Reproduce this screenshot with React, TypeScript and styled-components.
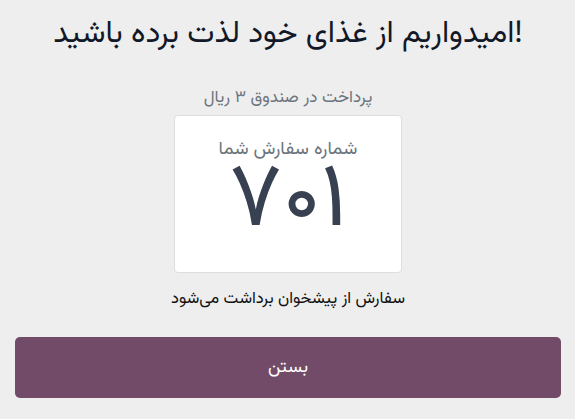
import styled, { createGlobalStyle } from "styled-components"

const Global = createGlobalStyle`
  html, body {
    margin: 0;
    padding: 0;
    background: #eeeeee;
  }
  body {
    font-family: "Vazirmatn", "Noto Sans Arabic", "Noto Naskh Arabic", "DejaVu Sans", sans-serif;
  }
`

const Page = styled.div`
  direction: rtl;
  box-sizing: border-box;
  height: 419px;
  display: flex;
  flex-direction: column;
  align-items: center;
  padding: 14px 14px 21px 15px;
`

const Title = styled.h1`
  margin: 0;
  font-size: 31px;
  font-weight: 400;
  color: #111827;
  line-height: 42px;
`

const Main = styled.div`
  flex: 1;
  display: flex;
  flex-direction: column;
  align-items: center;
  padding-top: 30px;
`

const Payment = styled.div`
  font-size: 17px;
  color: #6c757d;
  line-height: 24px;
  margin-bottom: 5px;
`

const Card = styled.div`
  box-sizing: border-box;
  width: 228px;
  height: 158px;
  background: #ffffff;
  border: 1px solid #dddddd;
  border-radius: 4px;
  display: flex;
  flex-direction: column;
  align-items: center;
  padding-top: 22px;
`

const CardLabel = styled.div`
  font-size: 18.5px;
  color: #6c757d;
  line-height: 24px;
`

const OrderNumber = styled.div`
  font-size: 91px;
  line-height: 82px;
  color: #374151;
`

const Pickup = styled.div`
  margin-top: 14px;
  font-size: 16.5px;
  color: #111111;
  line-height: 24px;
`

const CloseButton = styled.button`
  width: 100%;
  height: 61px;
  border: none;
  border-radius: 5px;
  background: #714b67;
  color: #ffffff;
  font-family: inherit;
  font-size: 18px;
  cursor: pointer;
`

export default function App() {
  return (
    <>
      <Global />
      <Page>
        <Title>!امیدواریم از غذای خود لذت برده باشید</Title>
        <Main>
          <Payment>پرداخت در صندوق ۳ ریال</Payment>
          <Card>
            <CardLabel>شماره سفارش شما</CardLabel>
            <OrderNumber>۷۰۱</OrderNumber>
          </Card>
          <Pickup>سفارش از پیشخوان برداشت می‌شود</Pickup>
        </Main>
        <CloseButton>بستن</CloseButton>
      </Page>
    </>
  )
}
